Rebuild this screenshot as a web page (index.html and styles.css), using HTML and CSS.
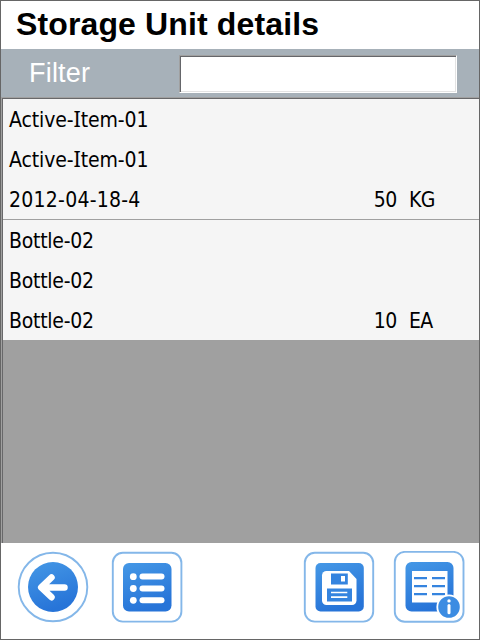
FILE: index.html
```
<!DOCTYPE html>
<html lang="en">
<head>
<meta charset="utf-8">
<title>Storage Unit details</title>
<link rel="stylesheet" href="styles.css">
</head>
<body>
<main class="screen">
  <h1 class="title">Storage Unit details</h1>
  <div class="filter">
    <label class="filter-label" for="filter">Filter</label>
    <input class="filter-input" id="filter" type="text">
  </div>
  <section class="list">
    <article class="item">
      <div class="row"><span class="name item-code">Active-<span class="cap">I</span>tem-01</span></div>
      <div class="row"><span class="name item-code">Active-<span class="cap">I</span>tem-01</span></div>
      <div class="row"><span class="name lot">2012-04-18-4</span><span class="qty">50</span><span class="unit">KG</span></div>
    </article>
    <article class="item">
      <div class="row"><span class="name bottle">Bottle-02</span></div>
      <div class="row"><span class="name bottle">Bottle-02</span></div>
      <div class="row"><span class="name bottle">Bottle-02</span><span class="qty">10</span><span class="unit">EA</span></div>
    </article>
  </section>
  <nav class="toolbar">
    <button class="tool" aria-label="Back">
      <svg width="72" height="72" viewBox="0 0 72 72">
        <defs><linearGradient id="blue" x1="0" y1="0" x2=".35" y2="1"><stop offset="0" stop-color="#4598e6"/><stop offset="1" stop-color="#2774d8"/></linearGradient></defs>
        <circle class="ring" cx="36" cy="36" r="34.3"/>
        <circle cx="36" cy="36" r="25" fill="url(#blue)"/>
        <path class="arrow" d="M47.500 36.400H24.500M34.500 26.500 24.200 36.400l10.300 9.800"/>
      </svg>
    </button>
    <button class="tool" aria-label="List">
      <svg width="72" height="72" viewBox="0 0 72 72">
        <rect class="ring" x="1.8" y="1.8" width="68.6" height="68.8" rx="10"/>
        <rect x="12" y="12" width="48.5" height="48.5" rx="6" fill="url(#blue)"/>
        <g fill="#fff"><circle cx="22.3" cy="25.7" r="3.4"/><circle cx="22.3" cy="37.5" r="3.4"/><circle cx="22.3" cy="49.3" r="3.4"/>
        <rect x="28.5" y="22.6" width="25" height="6" rx="3"/><rect x="28.5" y="34.5" width="25" height="6" rx="3"/><rect x="28.5" y="46.3" width="25" height="6" rx="3"/></g>
      </svg>
    </button>
    <button class="tool save" aria-label="Save">
      <svg width="72" height="72" viewBox="0 0 72 72">
        <rect class="ring" x="1.8" y="1.8" width="68.4" height="68.8" rx="10"/>
        <rect x="12.500" y="12" width="48.3" height="48.5" rx="5" fill="url(#blue)"/>
        <path fill="#fff" d="M23.5 20H46l7.5 8v21.5a4.5 4.5 0 0 1-4.500 4.500H23.500a4.500 4.500 0 0 1-4.500-4.500V24.500a4.500 4.500 0 0 1 4.500-4.500z"/>
        <path fill="#3584df" d="M28 22.500h16.800v11H28zM24 37.500h25v13H24z"/>
        <path fill="#fff" d="M38 25h4v5.500h-4zM28 40.700h16.300v1.600H28zM28 45.300h16.300v1.600H28z"/>
      </svg>
    </button>
    <button class="tool info" aria-label="Details">
      <svg width="72" height="72" viewBox="0 0 72 72">
        <rect class="ring" x="1.800" y=".9" width="68.700" height="69.800" rx="10"/>
        <rect x="12.500" y="11" width="48" height="49.500" rx="6" fill="url(#blue)"/>
        <path fill="#fff" d="M19 20h35.500v31.500H19z"/>
        <path fill="#3584df" d="M21 26h13v2.300H21zM39 26h13v2.300H39zM21 34h13v2.300H21zM39 34h13v2.300H39zM21 42h13v2.300H21zM39 42h13v2.300H39z"/>
        <circle cx="56" cy="56" r="11.700" fill="#3c8ce2" stroke="#fff" stroke-width="1.800"/>
        <circle cx="56" cy="49.900" r="1.700" fill="#fff"/>
        <path d="M56 54.600v7.200" stroke="#fff" stroke-width="3" stroke-linecap="round"/>
      </svg>
    </button>
  </nav>
</main>
</body>
</html>
```
FILE: styles.css
```
* { box-sizing: border-box; }
body { margin: 0; }
.screen {
  display: flex;
  flex-direction: column;
  width: 480px;
  height: 640px;
  border: 1px solid #666;
  background: #fff;
  color: #000;
  font-family: "Liberation Sans", Arial, sans-serif;
}
.title {
  height: 48px;
  margin: 0;
  padding-left: 15px;
  font-size: 32px;
  line-height: 46px;
  letter-spacing: .13px;
  white-space: nowrap;
}
.filter {
  display: flex;
  align-items: flex-start;
  height: 48px;
  padding: 6px 21px 0 28px;
  background: #a7b1b9;
}
.filter-label {
  width: 150px;
  color: #fff;
  font-size: 27px;
  line-height: 36px;
  letter-spacing: .2px;
}
.filter-input {
  width: 278px;
  height: 38px;
  padding: 0 6px;
  border: 1px solid #fff;
  border-top-color: #a0a0a0;
  border-left-color: #a0a0a0;
  background: #fff;
  box-shadow: inset 1px 1px #65666a, inset -1px -1px #e3e3e3;
  font: 22px "Liberation Sans", Arial, sans-serif;
  outline: 0;
}
.list {
  height: 446px;
  padding: 1px 0 0 1px;
  border-top: 1px solid #a0a0a0;
  border-left: 1px solid #a0a0a0;
  background: #a0a0a0;
  box-shadow: inset 1px 1px #68686a;
}
.item {
  height: 121px;
  padding-left: 6px;
  background: #f5f5f5;
  border-bottom: 1px solid #a0a0a0;
}
.row {
  display: flex;
  height: 40px;
  font-family: "DejaVu Sans Condensed", "DejaVu Sans", Tahoma, sans-serif;
  font-size: 21px;
  font-stretch: condensed;
  line-height: 42px;
  white-space: nowrap;
}
.name { width: 340px; }
.item-code { letter-spacing: -.1px; }
.cap { font-family: "Noto Sans", sans-serif; font-size: 21.5px; font-stretch: normal; line-height: 1; }
.lot { letter-spacing: .25px; }
.bottle { letter-spacing: -.25px; }
.qty { width: 48px; text-align: right; letter-spacing: -.4px; }
.unit { margin-left: 12px; letter-spacing: -.6px; }
.toolbar {
  display: flex;
  flex: 1;
  padding: 8px 0 0 16px;
}
.tool {
  width: 72px;
  height: 72px;
  padding: 0;
  border: 0;
  background: none;
}
.tool + .tool { margin-left: 22px; }
.tool.save { margin-left: 120px; }
.tool.info { margin-left: 18px; }
.tool svg { display: block; }
.ring { fill: #fff; stroke: #84b7e9; stroke-width: 1.9; }
.arrow { fill: none; stroke: #fff; stroke-width: 6.5; stroke-linecap: round; stroke-linejoin: round; }
```
